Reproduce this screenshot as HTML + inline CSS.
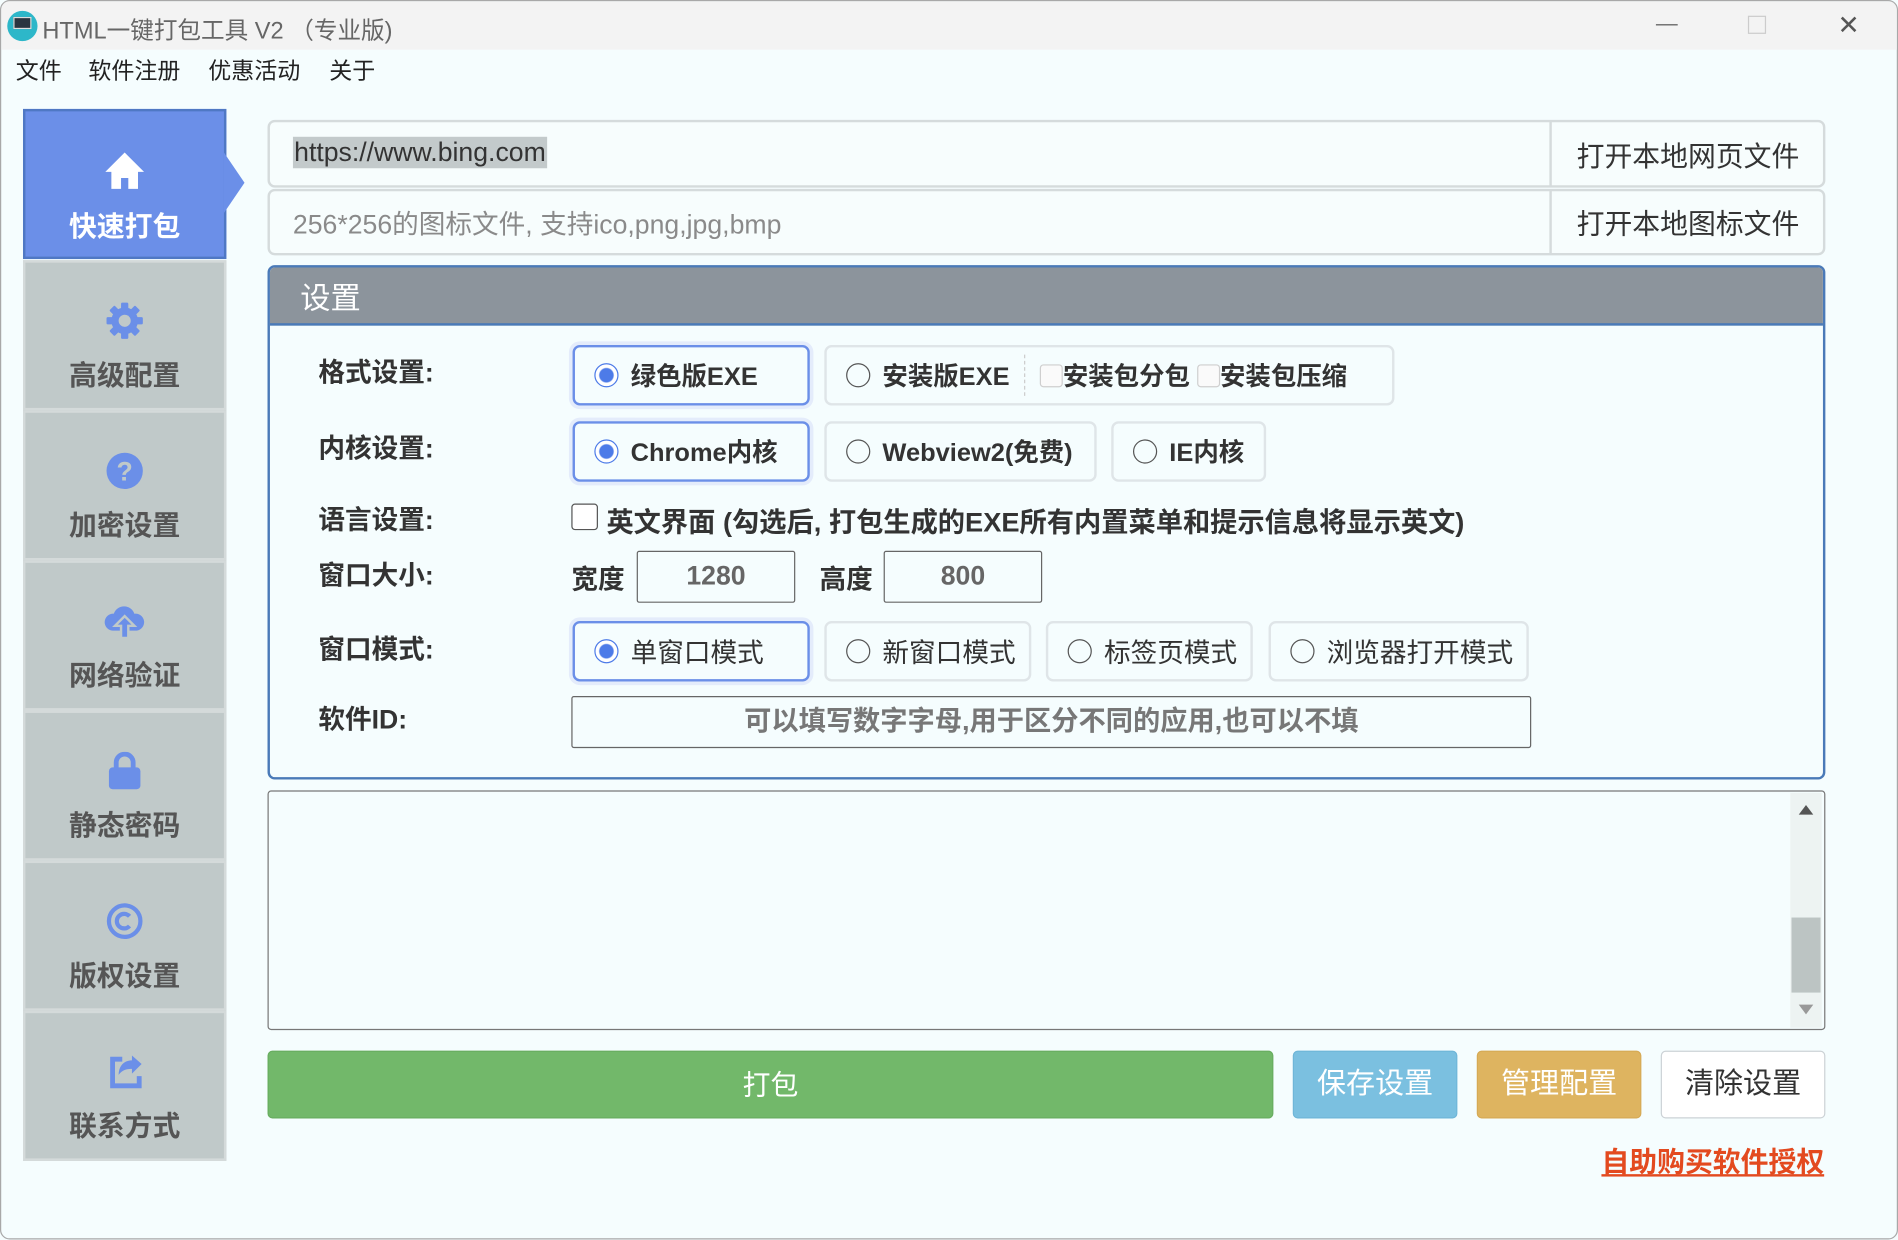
<!DOCTYPE html>
<html><head><meta charset="utf-8"><style>
*{box-sizing:border-box;margin:0;padding:0}
html,body{width:1898px;height:1240px;overflow:hidden;background:#f5fdfe}
#w{position:absolute;left:0;top:0;width:1568px;height:1024px;transform:scale(1.21046);transform-origin:0 0;font-family:"Liberation Sans","Noto Sans CJK SC",sans-serif;background:#f5fdfe;border:1px solid #a8a8a8;border-radius:8px;overflow:hidden}
.a{position:absolute}
.title{left:0;top:0;width:1568px;height:40px;background:#f3f3f3}
.side{left:18px;width:168px;background:#c0c9c9;border:2px solid #d4dada;text-align:center;color:#555;font-weight:bold;font-size:23px}
.side svg{display:block;margin:32px auto 10px}
.inp{background:#f7fdfd;border:2px solid #d5dbdc;border-radius:6px}
.btn{font-size:22px;color:#333;text-align:center}
.lab{left:262px;font-size:22px;font-weight:bold;color:#333}
.opt{height:50px;border:2px solid #dfe5e8;border-radius:6px;font-size:20px;font-weight:bold;color:#333;display:flex;align-items:center;padding-left:16px}
.opt.sel{border-color:#6b8fe8;box-shadow:0 0 0 3px #e4ecfb}
.r{width:20px;height:20px;border:1.5px solid #555;border-radius:50%;margin-right:10px;flex:none}
.sel .r{border-color:#4d7be8;background:radial-gradient(circle,#4d7be8 0 5.5px,#fff 6.5px)}
.cb{width:19px;height:19px;border:1.5px solid #cfcfcf;border-radius:3px;display:inline-block;vertical-align:-2px;background:#fafafa}
</style></head><body><div id="w">
<div class="a title"></div>
<div class="a" style="left:5px;top:8px;width:25px;height:25px;border-radius:50%;background:#2db7c9"></div>
<div class="a" style="left:10px;top:13px;width:15px;height:10px;background:#2a3440;border:1px solid #ddd"></div>
<div class="a" style="left:34px;top:8px;font-size:19.5px;color:#666">HTML一键打包工具 V2 （专业版)</div>
<div class="a" style="left:1367px;top:19px;width:18px;height:1px;background:#555"></div>
<div class="a" style="left:1443px;top:12px;width:15px;height:15px;border:1px solid #ccc"></div>
<div class="a" style="left:1517px;top:9px;font-size:22px;color:#555;line-height:22px">✕</div>
<div class="a" style="left:12px;top:43px;font-size:19px;color:#222">文件</div>
<div class="a" style="left:72px;top:43px;font-size:19px;color:#222">软件注册</div>
<div class="a" style="left:171px;top:43px;font-size:19px;color:#222">优惠活动</div>
<div class="a" style="left:271px;top:43px;font-size:19px;color:#222">关于</div>

<div class="a side" style="top:89px;height:124px;background:#6b8fe8;border-color:#4f78c4;color:#fff">
<svg width="36" height="34" viewBox="0 0 36 34"><path d="M18 2L2 18h5v14h8v-9h6v9h8V18h5z" fill="#fff"/></svg>快速打包</div>
<div class="a" style="left:184px;top:125px;width:0;height:0;border-top:25px solid transparent;border-bottom:25px solid transparent;border-left:17px solid #6b8fe8"></div>
<div class="a side" style="top:214px;height:124px"><svg width="32" height="32" viewBox="0 0 32 32"><g fill="#6b8fe8"><circle cx="16" cy="16" r="11"/><rect x="13" y="1" width="6" height="30" rx="1"/><rect x="1" y="13" width="30" height="6" rx="1"/><rect x="13" y="1" width="6" height="30" rx="1" transform="rotate(45 16 16)"/><rect x="13" y="1" width="6" height="30" rx="1" transform="rotate(-45 16 16)"/></g><circle cx="16" cy="16" r="5" fill="#c0c9c9"/></svg>高级配置</div>
<div class="a side" style="top:338px;height:124px"><svg width="32" height="32" viewBox="0 0 32 32"><circle cx="16" cy="16" r="15" fill="#6b8fe8"/><text x="16" y="24" text-anchor="middle" font-size="22" font-weight="bold" fill="#c0c9c9" font-family="Liberation Sans">?</text></svg>加密设置</div>
<div class="a side" style="top:462px;height:124px"><svg width="36" height="32" viewBox="0 0 36 32"><path d="M8 24a7 7 0 0 1 1-14 9 9 0 0 1 17 0 7 7 0 0 1 2 14z" fill="#6b8fe8"/><path d="M18 12l-8 8h5v10h6V20h5z" fill="#6b8fe8" stroke="#c0c9c9" stroke-width="2"/></svg>网络验证</div>
<div class="a side" style="top:586px;height:124px"><svg width="32" height="32" viewBox="0 0 32 32"><path d="M9 14V9a7 7 0 0 1 14 0v5" fill="none" stroke="#6b8fe8" stroke-width="4"/><rect x="3" y="13" width="26" height="18" rx="3" fill="#6b8fe8"/></svg>静态密码</div>
<div class="a side" style="top:710px;height:124px"><svg width="32" height="32" viewBox="0 0 32 32"><circle cx="16" cy="16" r="13" fill="none" stroke="#6b8fe8" stroke-width="3.5"/><path d="M20 12a6 6 0 1 0 0 8" fill="none" stroke="#6b8fe8" stroke-width="3.5"/></svg>版权设置</div>
<div class="a side" style="top:834px;height:124px"><svg width="32" height="32" viewBox="0 0 32 32"><path d="M14 6H6v22h22v-8" fill="none" stroke="#6b8fe8" stroke-width="4"/><path d="M30 10l-8-7v4c-7 0-11 5-11 12 3-4 6-5 11-5v4z" fill="#6b8fe8"/></svg>联系方式</div>

<div class="a inp" style="left:220px;top:98px;width:1287px;height:56px"></div>
<div class="a" style="left:1279px;top:99px;width:2px;height:54px;background:#d5dbdc"></div>
<div class="a" style="left:241px;top:112px;font-size:22px;color:#333;background:#c3cacb;padding:0 1px;line-height:26px">https://www.bing.com</div>
<div class="a btn" style="left:1281px;top:109px;width:225px;font-size:23px">打开本地网页文件</div>
<div class="a inp" style="left:220px;top:155px;width:1287px;height:55px"></div>
<div class="a" style="left:1279px;top:156px;width:2px;height:53px;background:#d5dbdc"></div>
<div class="a" style="left:241px;top:167px;font-size:22px;color:#8a8a8a">256*256的图标文件, 支持ico,png,jpg,bmp</div>
<div class="a btn" style="left:1281px;top:165px;width:225px;font-size:23px">打开本地图标文件</div>

<div class="a" style="left:220px;top:218px;width:1287px;height:425px;border:2px solid #4a7ab8;border-radius:6px;overflow:hidden">
<div style="height:48px;background:#8c949c;border-bottom:2px solid #4a7ab8;color:#fff;font-size:25px;padding:6px 0 0 25px">设置</div></div>
<div class="a lab" style="top:289px">格式设置:</div>
<div class="a lab" style="top:352px">内核设置:</div>
<div class="a lab" style="top:411px">语言设置:</div>
<div class="a lab" style="top:457px">窗口大小:</div>
<div class="a lab" style="top:518px">窗口模式:</div>
<div class="a lab" style="top:576px">软件ID:</div>

<div class="a opt sel" style="left:472px;top:284px;width:196px;font-size:21px"><span class="r"></span>绿色版EXE</div>
<div class="a opt" style="left:680px;top:284px;width:471px;font-size:21px"><span class="r"></span>安装版EXE<span style="display:inline-block;width:1px;height:34px;border-left:1px dashed #ccc;margin:0 12px"></span><span class="cb"></span>安装包分包&nbsp;<span class="cb"></span>安装包压缩</div>
<div class="a opt sel" style="left:472px;top:347px;width:196px;font-size:21px"><span class="r"></span>Chrome内核</div>
<div class="a opt" style="left:680px;top:347px;width:225px;font-size:21px"><span class="r"></span>Webview2(免费)</div>
<div class="a opt" style="left:917px;top:347px;width:128px;font-size:21px"><span class="r"></span>IE内核</div>
<div class="a" style="left:471px;top:415px;width:22px;height:22px;border:1.5px solid #555;border-radius:3px;background:#fff"></div>
<div class="a" style="left:500px;top:413px;font-size:22.5px;font-weight:bold;color:#333">英文界面 (勾选后, 打包生成的EXE所有内置菜单和提示信息将显示英文)</div>
<div class="a" style="left:471px;top:460px;font-size:22px;font-weight:bold;color:#333">宽度</div>
<div class="a" style="left:525px;top:454px;width:131px;height:43px;border:1.5px solid #666;border-radius:2px;font-size:22px;font-weight:bold;color:#666;text-align:center;line-height:40px">1280</div>
<div class="a" style="left:676px;top:460px;font-size:22px;font-weight:bold;color:#333">高度</div>
<div class="a" style="left:729px;top:454px;width:131px;height:43px;border:1.5px solid #666;border-radius:2px;font-size:22px;font-weight:bold;color:#666;text-align:center;line-height:40px">800</div>
<div class="a opt sel" style="left:472px;top:512px;width:196px;font-weight:normal;font-size:22px"><span class="r"></span>单窗口模式</div>
<div class="a opt" style="left:680px;top:512px;width:171px;font-weight:normal;font-size:22px"><span class="r"></span>新窗口模式</div>
<div class="a opt" style="left:863px;top:512px;width:171px;font-weight:normal;font-size:22px"><span class="r"></span>标签页模式</div>
<div class="a opt" style="left:1047px;top:512px;width:215px;font-weight:normal;font-size:22px"><span class="r"></span>浏览器打开模式</div>
<div class="a" style="left:471px;top:574px;width:793px;height:43px;border:1.5px solid #666;border-radius:2px;font-size:22.5px;font-weight:bold;color:#777;text-align:center;line-height:40px">可以填写数字字母,用于区分不同的应用,也可以不填</div>

<div class="a" style="left:220px;top:652px;width:1287px;height:198px;border:1.5px solid #777;border-radius:3px;background:#f5fdfe"></div>
<div class="a" style="left:1478px;top:654px;width:26px;height:194px;background:#edf3f2"></div>
<div class="a" style="left:1479px;top:757px;width:24px;height:62px;background:#bcc4c3"></div>
<div class="a" style="left:1485px;top:664px;width:0;height:0;border-left:6px solid transparent;border-right:6px solid transparent;border-bottom:8px solid #555"></div>
<div class="a" style="left:1485px;top:829px;width:0;height:0;border-left:6px solid transparent;border-right:6px solid transparent;border-top:8px solid #999"></div>

<div class="a" style="left:220px;top:867px;width:831px;height:56px;background:#72b86a;border:1px solid #68ad60;border-radius:4px;color:#fff;font-size:23px;text-align:center;line-height:54px">打包</div>
<div class="a" style="left:1067px;top:867px;width:136px;height:56px;background:#7bc0e0;border:1px solid #6fb6d8;border-radius:4px;color:#fff;font-size:24px;text-align:center;line-height:54px">保存设置</div>
<div class="a" style="left:1219px;top:867px;width:136px;height:56px;background:#deb460;border:1px solid #d6aa55;border-radius:4px;color:#fff;font-size:24px;text-align:center;line-height:54px">管理配置</div>
<div class="a" style="left:1371px;top:867px;width:136px;height:56px;background:#fff;border:1.5px solid #ccd2d6;border-radius:4px;color:#333;font-size:24px;text-align:center;line-height:53px">清除设置</div>
<div class="a" style="left:1322px;top:940px;font-size:23px;font-weight:bold;color:#e34a1f;text-decoration:underline">自助购买软件授权</div>
</div></body></html>
